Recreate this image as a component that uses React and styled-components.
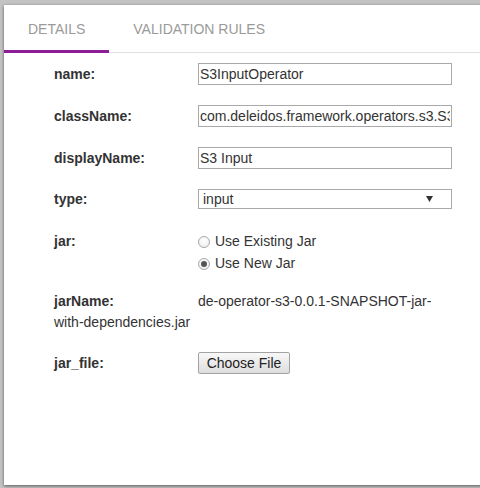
import React from "react";
import styled, { createGlobalStyle } from "styled-components";

const Global = createGlobalStyle`
  html, body { margin: 0; padding: 0; background: #c3c3c3; overflow: hidden; }
  body { font-family: "Liberation Sans", Arial, sans-serif; }
`;

const Page = styled.div`
  width: 480px;
  height: 488px;
  padding: 5px 0 0 4px;
  box-sizing: border-box;
  overflow: hidden;
`;

const Card = styled.div`
  width: 500px;
  height: 480px;
  background: #fff;
  box-shadow: 0 1px 3px rgba(0, 0, 0, 0.55);
`;

const TabBar = styled.div`
  display: flex;
  height: 48px;
  box-sizing: border-box;
  border-bottom: 1px solid #e0e0e0;
`;

const Tab = styled.div`
  position: relative;
  display: flex;
  align-items: center;
  padding: 0 24px;
  font-size: 14px;
  color: #9a9a9a;
  text-transform: uppercase;
  &::after {
    content: "";
    display: ${(p) => (p.$active ? "block" : "none")};
    position: absolute;
    left: 0;
    right: 0;
    bottom: -1px;
    height: 3px;
    background: #8c1d97;
  }
`;

const Form = styled.div`
  padding: 10px 0 0 50px;
  color: #333;
  font-size: 14px;
`;

const Row = styled.div`
  display: flex;
  align-items: flex-start;
  margin-bottom: ${(p) => p.$mb ?? 20}px;
`;

const Label = styled.div`
  width: 144px;
  flex: none;
  font-weight: bold;
  line-height: ${(p) => p.$lh ?? 22}px;
`;

const TextInput = styled.input`
  width: 254px;
  height: 22px;
  box-sizing: border-box;
  border: 1px solid #a9a9a9;
  padding: 0 1px;
  margin: 0;
  font-family: "Liberation Sans", Arial, sans-serif;
  font-size: 14px;
  color: #333;
  outline: none;
`;

const SelectWrap = styled.div`
  position: relative;
  width: 254px;
  height: 20px;
`;

const Select = styled.div`
  width: 254px;
  height: 20px;
  box-sizing: border-box;
  border: 1px solid #a9a9a9;
  padding-left: 4px;
  font-size: 14px;
  line-height: 18px;
  color: #333;
`;

const Arrow = styled.svg`
  position: absolute;
  right: 19px;
  top: 7px;
`;

const Options = styled.div`
  display: flex;
  flex-direction: column;
`;

const Option = styled.label`
  display: flex;
  align-items: center;
  height: 22px;
  font-size: 14px;
  color: #333;
`;

const Radio = styled.span`
  width: 12px;
  height: 12px;
  box-sizing: border-box;
  border-radius: 50%;
  border: 1px solid #a8a8a8;
  background: radial-gradient(circle at 50% 35%, #ffffff 0%, #ececec 100%);
  margin-right: 5px;
  margin-top: 1px;
  display: flex;
  align-items: center;
  justify-content: center;
  &::after {
    content: "";
    display: ${(p) => (p.$checked ? "block" : "none")};
    width: 6px;
    height: 6px;
    border-radius: 50%;
    background: #555;
  }
`;

const FlowRow = styled.div`
  line-height: 21px;
  margin-bottom: ${(p) => p.$mb ?? 20}px;
  width: 400px;
`;

const InlineLabel = styled.span`
  display: inline-block;
  width: 144px;
  font-weight: bold;
`;

const FileButton = styled.button`
  width: 92px;
  height: 22px;
  box-sizing: border-box;
  border: 1px solid #a3a3a3;
  border-radius: 2px;
  background: linear-gradient(#f8f8f8, #dddddd);
  font-family: "Liberation Sans", Arial, sans-serif;
  font-size: 14px;
  color: #222;
  padding: 0;
  margin: 0;
`;

export default function App() {
  return (
    <Page>
      <Global />
      <Card>
        <TabBar>
          <Tab $active>Details</Tab>
          <Tab>Validation Rules</Tab>
        </TabBar>
        <Form>
          <Row>
            <Label>name:</Label>
            <TextInput defaultValue="S3InputOperator" />
          </Row>
          <Row>
            <Label>className:</Label>
            <TextInput defaultValue="com.deleidos.framework.operators.s3.S3InputOperator" />
          </Row>
          <Row>
            <Label>displayName:</Label>
            <TextInput defaultValue="S3 Input" />
          </Row>
          <Row $mb={21}>
            <Label $lh={20}>type:</Label>
            <SelectWrap>
              <Select>input</Select>
              <Arrow width="7" height="6" viewBox="0 0 7 6">
                <path d="M0 0 L7 0 L3.5 6 Z" fill="#333" />
              </Arrow>
            </SelectWrap>
          </Row>
          <Row $mb={17}>
            <Label>jar:</Label>
            <Options>
              <Option>
                <Radio />
                Use Existing Jar
              </Option>
              <Option>
                <Radio $checked />
                Use New Jar
              </Option>
            </Options>
          </Row>
          <FlowRow $mb={19}>
            <InlineLabel>jarName:</InlineLabel>
            <span>de-operator-s3-0.0.1-SNAPSHOT-jar-with-dependencies.jar</span>
          </FlowRow>
          <Row>
            <Label>jar_file:</Label>
            <FileButton>Choose File</FileButton>
          </Row>
        </Form>
      </Card>
    </Page>
  );
}
